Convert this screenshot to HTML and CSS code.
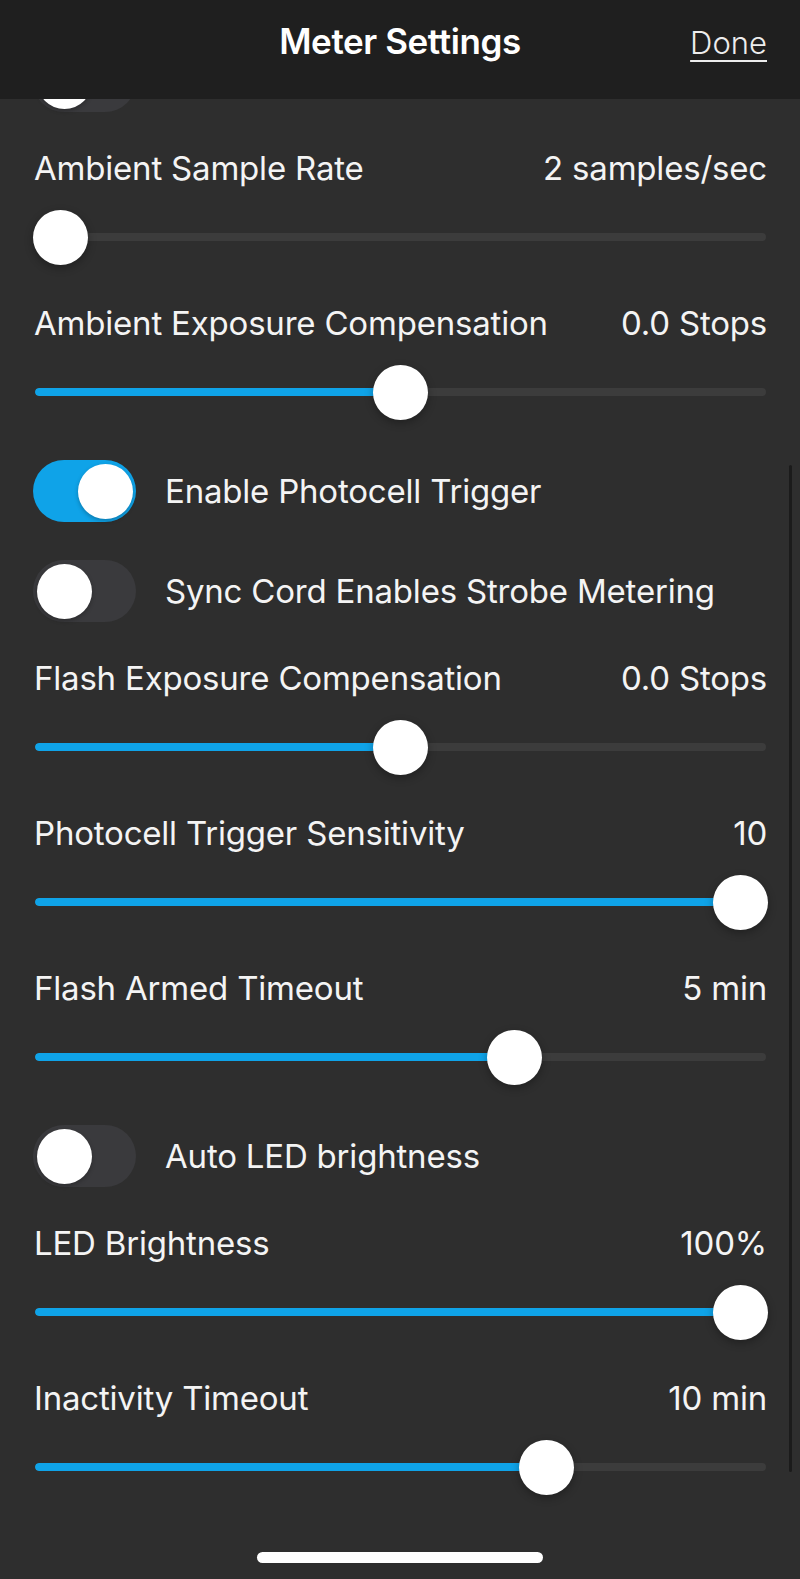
FILE: index.html
```html
<!DOCTYPE html>
<html lang="en">
<head>
<meta charset="utf-8">
<title>Meter Settings</title>
<link rel="stylesheet" href="styles.css">
</head>
<body>
<div class="screen">
  <header class="nav">
    <span class="nav-side"></span>
    <h1 class="title">Meter Settings</h1>
    <span class="nav-side nav-right"><a class="done">Done</a></span>
  </header>
  <main class="scroll">
    <div class="toggle-row peek"><span class="switch"><span class="knob"></span></span><span class="toggle-label"></span></div>

    <section class="setting">
      <div class="label-row"><span>Ambient Sample Rate</span><span>2 samples/sec</span></div>
      <div class="slider" style="--v:0"><div class="track"><div class="fill"></div></div><div class="thumb"></div></div>
    </section>

    <section class="setting">
      <div class="label-row"><span>Ambient Exposure Compensation</span><span>0.0 Stops</span></div>
      <div class="slider" style="--v:0.5"><div class="track"><div class="fill"></div></div><div class="thumb"></div></div>
    </section>

    <div class="toggle-row"><span class="switch on"><span class="knob"></span></span><span class="toggle-label">Enable Photocell Trigger</span></div>
    <div class="toggle-row"><span class="switch"><span class="knob"></span></span><span class="toggle-label">Sync Cord Enables Strobe Metering</span></div>

    <section class="setting">
      <div class="label-row"><span>Flash Exposure Compensation</span><span>0.0 Stops</span></div>
      <div class="slider" style="--v:0.5"><div class="track"><div class="fill"></div></div><div class="thumb"></div></div>
    </section>

    <section class="setting">
      <div class="label-row"><span>Photocell Trigger Sensitivity</span><span>10</span></div>
      <div class="slider" style="--v:1"><div class="track"><div class="fill"></div></div><div class="thumb"></div></div>
    </section>

    <section class="setting">
      <div class="label-row"><span>Flash Armed Timeout</span><span>5 min</span></div>
      <div class="slider" style="--v:0.667"><div class="track"><div class="fill"></div></div><div class="thumb"></div></div>
    </section>

    <div class="toggle-row"><span class="switch"><span class="knob"></span></span><span class="toggle-label">Auto LED brightness</span></div>

    <section class="setting">
      <div class="label-row"><span>LED Brightness</span><span>100%</span></div>
      <div class="slider" style="--v:1"><div class="track"><div class="fill"></div></div><div class="thumb"></div></div>
    </section>

    <section class="setting">
      <div class="label-row"><span>Inactivity Timeout</span><span>10 min</span></div>
      <div class="slider" style="--v:0.714"><div class="track"><div class="fill"></div></div><div class="thumb"></div></div>
    </section>

    <div class="scrollbar"></div>
  </main>
  <div class="home-bar"></div>
</div>
</body>
</html>
```

FILE: styles.css
```css
* { box-sizing: border-box; }

html, body {
  margin: 0;
  padding: 0;
  background: #2e2e2e;
}

body {
  font-family: "Inter", "Noto Sans", "Liberation Sans", sans-serif;
  color: #f4f4f4;
}

.screen {
  position: relative;
  width: 800px;
  height: 1579px;
  display: flex;
  flex-direction: column;
  background: #2e2e2e;
  overflow: hidden;
}

.nav {
  flex: 0 0 99px;
  height: 99px;
  background: #1f1f1f;
  display: grid;
  grid-template-columns: 1fr auto 1fr;
  align-items: start;
  padding-top: 21px;
  position: relative;
  z-index: 2;
}

.title {
  margin: 0;
  font-size: 35px;
  line-height: 40px;
  font-weight: 600;
  letter-spacing: -0.4px;
  color: #ffffff;
}

.nav-right {
  display: flex;
  justify-content: flex-end;
  padding-right: 33px;
}

.done {
  font-size: 31px;
  line-height: 44px;
  font-weight: 300;
  color: #ededed;
  text-decoration: underline;
  text-decoration-thickness: 2px;
  text-underline-offset: 6px;
}

.scroll {
  position: relative;
  flex: 1 1 auto;
  overflow: hidden;
}

.toggle-row {
  height: 100px;
  display: flex;
  align-items: flex-start;
  padding: 16px 0 0 33px;
  gap: 29px;
}

.toggle-row.peek {
  margin-top: -65px;
}

.toggle-label {
  font-size: 33px;
  line-height: 62px;
  letter-spacing: -0.2px;
}

.switch {
  position: relative;
  flex: 0 0 auto;
  width: 103px;
  height: 62px;
  border-radius: 31px;
  background: #3a3a3d;
}

.switch.on {
  background: #0fa3e8;
}

.knob {
  position: absolute;
  top: 3.5px;
  left: 3.5px;
  width: 55px;
  height: 55px;
  border-radius: 50%;
  background: #ffffff;
  box-shadow: 0 2px 4px rgba(0, 0, 0, 0.25);
}

.switch.on .knob {
  left: auto;
  right: 3.5px;
}

.setting {
  margin-bottom: 17px;
}

.label-row {
  height: 68px;
  display: flex;
  justify-content: space-between;
  align-items: center;
  padding: 0 33px 0 34px;
  font-size: 33px;
  letter-spacing: -0.2px;
}

.slider {
  position: relative;
  height: 70px;
  margin: 0 32px 0 33px;
}

.track {
  position: absolute;
  left: 2px;
  right: 2px;
  top: 31px;
  height: 8px;
  border-radius: 4px;
  background: #3c3c3c;
  overflow: hidden;
}

.fill {
  height: 100%;
  width: calc(var(--v) * (100% - 51px) + 25.5px);
  background: #0fa3e8;
  border-radius: 4px;
}

.thumb {
  position: absolute;
  top: 7.5px;
  left: calc(var(--v) * (100% - 55px));
  width: 55px;
  height: 55px;
  border-radius: 50%;
  background: #ffffff;
  box-shadow: 0 3px 8px rgba(0, 0, 0, 0.3);
}

.scrollbar {
  position: absolute;
  right: 8px;
  top: 366px;
  width: 3px;
  height: 1007px;
  border-radius: 2px;
  background: #1b1b1b;
}

.home-bar {
  position: absolute;
  left: 257px;
  bottom: 16px;
  width: 286px;
  height: 11px;
  border-radius: 6px;
  background: #ffffff;
}
```
